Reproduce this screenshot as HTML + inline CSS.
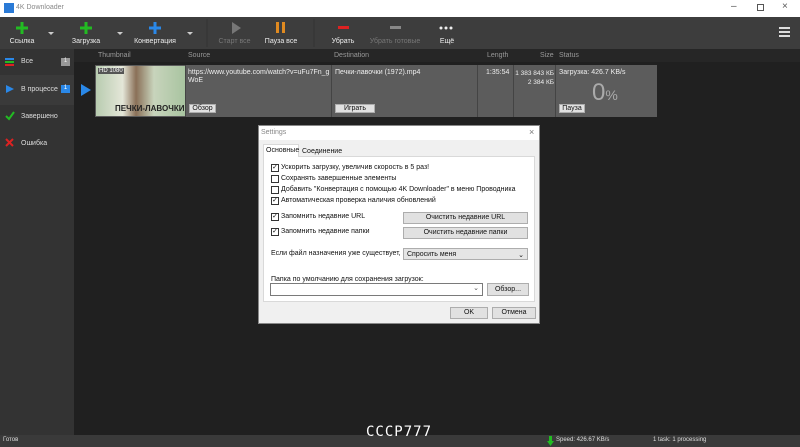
<!DOCTYPE html>
<html><head><meta charset="utf-8"><style>
*{margin:0;padding:0;box-sizing:border-box}
body{width:800px;height:447px;overflow:hidden;background:#202020;font-family:"Liberation Sans","DejaVu Sans",sans-serif;font-size:7px;color:#ddd;position:relative}
.a{position:absolute}
.tb{font-size:7px;color:#eee;text-align:center}
.btn{position:absolute;background:#e1e1e1;border:1px solid #adadad;color:#111;font-size:7px;text-align:center}
.cb{position:absolute;width:8px;height:8px;border:1px solid #333;background:#fff;font-size:7px;line-height:6px;text-align:center;color:#111}
.lbl{position:absolute;font-size:7px;color:#111;white-space:nowrap}
</style></head><body>
<div class="a" style="left:0;top:0;width:800px;height:17px;background:#fff"></div>
<div class="a" style="left:4px;top:3px;width:10px;height:10px;background:#2a7ad6"></div>
<div class="a" style="left:16px;top:4px;color:#888;font-size:7px">4K Downloader</div>
<div class="a" style="left:731px;top:1px;color:#555;font-size:10px">–</div>
<div class="a" style="left:757px;top:4px;width:7px;height:7px;border:1px solid #555"></div>
<div class="a" style="left:782px;top:1px;color:#555;font-size:10px">×</div>
<div class="a" style="left:0;top:17px;width:800px;height:32px;background:#3d3d3d"></div>
<svg class="a" style="left:0;top:17px" width="800" height="32">
<g stroke-width="3"><path d="M22 5v12M16 11h12" stroke="#22bb22"/><path d="M86 5v12M80 11h12" stroke="#22bb22"/><path d="M155 5v12M149 11h12" stroke="#2a88e8"/></g>
<g fill="#ccc"><path d="M48 15h6l-3 3z"/><path d="M117 15h6l-3 3z"/><path d="M187 15h6l-3 3z"/></g>
<path d="M232 5l9 6-9 6z" fill="#777"/>
<rect x="276" y="5" width="3" height="11" fill="#e08a20"/><rect x="282" y="5" width="3" height="11" fill="#e08a20"/>
<rect x="338" y="9" width="11" height="3" fill="#d22"/>
<rect x="390" y="9" width="11" height="3" fill="#888"/>
<g fill="#eee"><circle cx="441" cy="11" r="1.5"/><circle cx="446" cy="11" r="1.5"/><circle cx="451" cy="11" r="1.5"/></g>
<g fill="#ddd"><rect x="779" y="10" width="11" height="2"/><rect x="779" y="14" width="11" height="2"/><rect x="779" y="18" width="11" height="2"/></g>
<line x1="207" y1="2" x2="207" y2="30" stroke="#333"/><line x1="314" y1="2" x2="314" y2="30" stroke="#333"/>
</svg>
<div class="a tb" style="left:2px;top:38px;width:40px">Ссылка</div>
<div class="a tb" style="left:65px;top:38px;width:42px">Загрузка</div>
<div class="a tb" style="left:130px;top:38px;width:50px">Конвертация</div>
<div class="a tb" style="left:212px;top:38px;width:45px;color:#777">Старт все</div>
<div class="a tb" style="left:260px;top:38px;width:42px">Пауза все</div>
<div class="a tb" style="left:323px;top:38px;width:40px">Убрать</div>
<div class="a tb" style="left:365px;top:38px;width:60px;color:#777">Убрать готовые</div>
<div class="a tb" style="left:432px;top:38px;width:30px">Ещё</div>
<div class="a" style="left:0;top:49px;width:74px;height:386px;background:#333"></div>
<div class="a" style="left:0;top:75px;width:74px;height:30px;background:#3a3a3a"></div>
<div class="a" style="left:5px;top:58px;width:9px;height:2px;background:#2a88e8"></div>
<div class="a" style="left:5px;top:61px;width:9px;height:2px;background:#22bb22"></div>
<div class="a" style="left:5px;top:64px;width:9px;height:2px;background:#d22"></div>
<div class="a" style="left:21px;top:58px">Все</div>
<div class="a" style="left:61px;top:58px;width:9px;height:8px;background:#999;font-size:6px;text-align:center;color:#eee">1</div>
<svg class="a" style="left:5px;top:84px" width="10" height="10"><path d="M1 1l8 4-8 4z" fill="#2a88e8"/></svg>
<div class="a" style="left:21px;top:86px">В процессе</div>
<div class="a" style="left:61px;top:85px;width:9px;height:8px;background:#2a88e8;font-size:6px;text-align:center;color:#fff">1</div>
<svg class="a" style="left:5px;top:111px" width="10" height="10"><path d="M1 5l3 3 5-7" stroke="#22bb22" stroke-width="2" fill="none"/></svg>
<div class="a" style="left:21px;top:113px">Завершено</div>
<svg class="a" style="left:5px;top:138px" width="10" height="10"><path d="M1 1l7 7M8 1l-7 7" stroke="#d22" stroke-width="2"/></svg>
<div class="a" style="left:21px;top:140px">Ошибка</div>
<div class="a" style="left:74px;top:49px;width:726px;height:13px;background:#262626"></div>
<div class="a" style="left:98px;top:52px;color:#999">Thumbnail</div>
<div class="a" style="left:188px;top:52px;color:#999">Source</div>
<div class="a" style="left:334px;top:52px;color:#999">Destination</div>
<div class="a" style="left:487px;top:52px;color:#999">Length</div>
<div class="a" style="left:540px;top:52px;color:#999">Size</div>
<div class="a" style="left:559px;top:52px;color:#999">Status</div>
<svg class="a" style="left:80px;top:83px" width="12" height="14"><path d="M1 1l10 6-10 6z" fill="#2a88e8"/></svg>
<div class="a" style="left:95px;top:65px;width:562px;height:52px;background:#5c5c5c"></div>
<div class="a" style="left:96px;top:66px;width:89px;height:50px;background:linear-gradient(90deg,#b8ccb0,#e4e6d8 30%,#8a7058 45%,#c8d4bc 65%,#a8c4a0)"></div>
<div class="a" style="left:98px;top:68px;font-size:6px;color:#fff;background:#555;padding:0 1px">HD 1080</div>
<div class="a" style="left:115px;top:104px;font-size:8px;color:#222;font-weight:bold">ПЕЧКИ-ЛАВОЧКИ</div>
<div class="a" style="left:185px;top:65px;width:1px;height:52px;background:#444"></div>
<div class="a" style="left:331px;top:65px;width:1px;height:52px;background:#444"></div>
<div class="a" style="left:477px;top:65px;width:1px;height:52px;background:#444"></div>
<div class="a" style="left:513px;top:65px;width:1px;height:52px;background:#444"></div>
<div class="a" style="left:555px;top:65px;width:1px;height:52px;background:#444"></div>
<div class="a" style="left:188px;top:69px;color:#eee;width:142px;line-height:8px;word-break:break-all">https://www.youtube.com/watch?v=uFu7Fn_gWoE</div>
<div class="btn" style="left:189px;top:104px;width:27px;height:9px;line-height:7px">Обзор</div>
<div class="a" style="left:335px;top:69px;color:#eee">Печки-лавочки (1972).mp4</div>
<div class="btn" style="left:335px;top:104px;width:40px;height:9px;line-height:7px">Играть</div>
<div class="a" style="left:486px;top:69px;color:#eee">1:35:54</div>
<div class="a" style="left:510px;top:69px;color:#eee;width:44px;text-align:right;line-height:9px;white-space:nowrap;font-size:6.5px">1 383 843 КБ<br>2 384 КБ</div>
<div class="a" style="left:559px;top:69px;color:#eee">Загрузка: 426.7 KB/s</div>
<div class="a" style="left:592px;top:79px;color:#aaa;font-size:24px;font-weight:100">0<span style="font-size:14px">%</span></div>
<div class="btn" style="left:559px;top:104px;width:26px;height:9px;line-height:7px">Пауза</div>
<div class="a" style="left:258px;top:125px;width:282px;height:199px;background:#f0f0f0;border:1px solid #888"></div>
<div class="a" style="left:259px;top:126px;width:280px;height:14px;background:#fff"></div>
<div class="a" style="left:261px;top:129px;color:#888">Settings</div>
<div class="a" style="left:529px;top:127px;color:#777;font-size:9px">×</div>
<div class="a" style="left:263px;top:156px;width:272px;height:146px;background:#fff;border:1px solid #d9d9d9"></div>
<div class="a" style="left:263px;top:144px;width:36px;height:13px;background:#fff;border:1px solid #d9d9d9;border-bottom:none"></div>
<div class="lbl" style="left:266px;top:147px">Основные</div>
<div class="lbl" style="left:302px;top:148px">Соединение</div>
<div class="cb" style="left:271px;top:164px">✓</div><div class="lbl" style="left:281px;top:164px">Ускорить загрузку, увеличив скорость в 5 раз!</div>
<div class="cb" style="left:271px;top:175px"></div><div class="lbl" style="left:281px;top:175px">Сохранять завершенные элементы</div>
<div class="cb" style="left:271px;top:186px"></div><div class="lbl" style="left:281px;top:186px">Добавить "Конвертация с помощью 4K Downloader" в меню Проводника</div>
<div class="cb" style="left:271px;top:197px">✓</div><div class="lbl" style="left:281px;top:197px">Автоматическая проверка наличия обновлений</div>
<div class="cb" style="left:271px;top:213px">✓</div><div class="lbl" style="left:281px;top:213px">Запомнить недавние URL</div>
<div class="cb" style="left:271px;top:228px">✓</div><div class="lbl" style="left:281px;top:228px">Запомнить недавние папки</div>
<div class="btn" style="left:403px;top:212px;width:125px;height:12px;line-height:10px">Очистить недавние URL</div>
<div class="btn" style="left:403px;top:227px;width:125px;height:12px;line-height:10px">Очистить недавние папки</div>
<div class="lbl" style="left:271px;top:250px">Если файл назначения уже существует,</div>
<div class="a" style="left:403px;top:248px;width:125px;height:12px;background:#e5e5e5;border:1px solid #adadad;color:#111;padding:2px 3px">Спросить меня<span style="float:right">⌄</span></div>
<div class="lbl" style="left:271px;top:276px">Папка по умолчанию для сохранения загрузок:</div>
<div class="a" style="left:270px;top:283px;width:213px;height:13px;background:#fff;border:1px solid #7a7a7a;color:#555;text-align:right;padding-right:3px">⌄</div>
<div class="btn" style="left:487px;top:283px;width:42px;height:13px;line-height:11px">Обзор...</div>
<div class="btn" style="left:450px;top:307px;width:38px;height:12px;line-height:10px">OK</div>
<div class="btn" style="left:492px;top:307px;width:44px;height:12px;line-height:10px">Отмена</div>
<div class="a" style="left:0;top:435px;width:800px;height:12px;background:#3a3a3a"></div>
<div class="a" style="left:3px;top:437px;font-size:6px;color:#ddd">Готов</div>
<svg class="a" style="left:547px;top:436px" width="7" height="10"><path d="M2 0h3v5h2l-3.5 5L0 5h2z" fill="#22bb22"/></svg>
<div class="a" style="left:556px;top:437px;font-size:6px;color:#ddd">Speed: 426.67 KB/s</div>
<div class="a" style="left:653px;top:437px;font-size:6px;color:#ddd">1 task: 1 processing</div>
<div class="a" style="left:366px;top:424px;color:#fff;font-size:14px;font-family:'DejaVu Sans Mono',monospace;letter-spacing:1px;z-index:5">CCCP777</div>
</body></html>
